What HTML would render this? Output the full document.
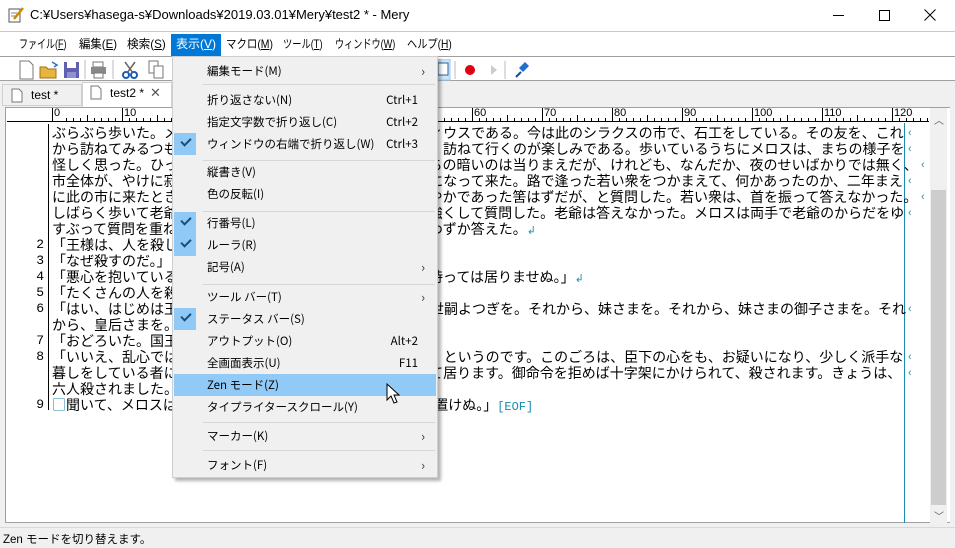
<!DOCTYPE html>
<html><head><meta charset="utf-8"><style>
*{margin:0;padding:0;box-sizing:border-box}
body{width:955px;height:548px;overflow:hidden;background:#f0f0f0;position:relative;font-family:"Liberation Sans","Noto Sans CJK JP",sans-serif;font-size:12px;color:#000}
.abs{position:absolute}
#title{left:0;top:0;width:955px;height:31px;background:#fff}
#menubar{left:0;top:31px;width:955px;height:25px;background:#fff;border-top:1px solid #c8c8c8}
#menubar span{position:absolute;top:5px;font-size:12px;white-space:nowrap;font-family:"Liberation Sans","Noto Sans CJK JP",sans-serif;line-height:15px;transform-origin:0 50%}
#toolbar{left:0;top:56px;width:955px;height:25px;background:#fff;border-top:1px solid #a0a0a0;border-bottom:1px solid #a0a0a0}
.row{position:absolute;left:52px;font-family:"Noto Sans CJK JP",sans-serif;font-size:14px;line-height:16px;white-space:pre;height:16px}
.ln{position:absolute;left:20px;width:24px;text-align:right;font-family:"Liberation Mono",monospace;font-size:13px;line-height:16px}
#menu{left:172px;top:56px;width:266px;height:422px;background:#f0f0f0;border:1px solid #cfcfcf;box-shadow:3px 3px 3px rgba(0,0,0,.3)}
.mi{position:absolute;left:34px;font-family:"Noto Sans CJK JP",sans-serif;font-size:11.5px;line-height:22px;height:22px;width:230px}
.sc{position:absolute;right:19px;top:0}
.ar{position:absolute;right:12px;top:0;font-size:13px;color:#333}
.sep{position:absolute;left:30px;width:232px;height:1px;background:#d7d7d7}
.ck{position:absolute;left:1px;width:22px;height:22px;background:#90c8f6}
.ck:after{content:"";position:absolute;left:7px;top:5px;width:8px;height:4px;border-left:2px solid #1a4f7a;border-bottom:2px solid #1a4f7a;transform:rotate(-45deg)}
.mk{position:absolute;left:908px;color:#2a8fb0;font-size:11px;line-height:16px}
</style></head><body>
<div id="title" class="abs">
 <svg class="abs" style="left:8px;top:7px" width="16" height="16"><rect x="1" y="2" width="11" height="13" fill="#fff" stroke="#555"/><line x1="3" y1="6" x2="9" y2="6" stroke="#888"/><line x1="3" y1="9" x2="9" y2="9" stroke="#888"/><line x1="6" y1="12" x2="15" y2="1" stroke="#c80" stroke-width="2.5"/></svg>
 <div class="abs" style="left:30px;top:7px;font-size:13px">C:¥Users¥hasega-s¥Downloads¥2019.03.01¥Mery¥test2 * - Mery</div>
 <div class="abs" style="left:833px;top:15px;width:11px;height:1px;background:#000"></div>
 <div class="abs" style="left:879px;top:10px;width:11px;height:11px;border:1px solid #000"></div>
 <svg class="abs" style="left:924px;top:9px" width="12" height="12"><path d="M0.5 0.5L11.5 11.5M11.5 0.5L0.5 11.5" stroke="#000" stroke-width="1"/></svg>
</div>
<div id="menubar" class="abs">
 <span style="left:19px;transform:scaleX(.75)">ファイル(<u>F</u>)</span>
 <span style="left:79px;transform:scaleX(.95)">編集(<u>E</u>)</span>
 <span style="left:127px;transform:scaleX(.97)">検索(<u>S</u>)</span>
 <div class="abs" style="left:171px;top:2px;width:50px;height:23px;background:#0078d7"></div>
 <span style="left:176px;color:#fff">表示(<u>V</u>)</span>
 <span style="left:226px;transform:scaleX(.87)">マクロ(<u>M</u>)</span>
 <span style="left:283px;transform:scaleX(.77)">ツール(<u>T</u>)</span>
 <span style="left:335px;transform:scaleX(.76)">ウィンドウ(<u>W</u>)</span>
 <span style="left:407px;transform:scaleX(.85)">ヘルプ(<u>H</u>)</span>
</div>
<div id="toolbar" class="abs">
 <svg class="abs" style="left:18px;top:3px" width="180" height="20">
  <path d="M2 1h9l4 4v14H2z" fill="#fff" stroke="#777"/>
  <path d="M22 7h6l2 2h8v9H22z" fill="#e8b440" stroke="#a07010"/><path d="M34 2l5 3-3 2" fill="none" stroke="#3070c0" stroke-width="1.5"/>
  <rect x="46" y="2" width="15" height="16" fill="#6060b0"/><rect x="49" y="2" width="9" height="6" fill="#fff"/><rect x="49" y="12" width="9" height="6" fill="#9090d0"/>
  <line x1="67" y1="0" x2="67" y2="19" stroke="#bbb"/>
  <rect x="75" y="2" width="10" height="5" fill="#fff" stroke="#777"/><rect x="73" y="7" width="15" height="7" fill="#888"/><rect x="76" y="13" width="9" height="5" fill="#fff" stroke="#777"/>
  <line x1="95" y1="0" x2="95" y2="19" stroke="#bbb"/>
  <circle cx="108" cy="15" r="3" fill="none" stroke="#1060c0" stroke-width="2"/><circle cx="116" cy="15" r="3" fill="none" stroke="#1060c0" stroke-width="2"/><path d="M107 2l8 11M117 2l-8 11" stroke="#666" stroke-width="1.5"/>
  <rect x="131" y="1" width="9" height="12" fill="#fff" stroke="#777"/><rect x="136" y="6" width="9" height="12" fill="#fff" stroke="#777"/>
 </svg>
 <svg class="abs" style="left:436px;top:2px" width="100" height="22">
  <rect x="0" y="0" width="14" height="21" fill="#cce4f7" stroke="#99c9ef"/><rect x="2" y="4" width="10" height="12" fill="#fff" stroke="#3060a0"/>
  <line x1="19" y1="2" x2="19" y2="20" stroke="#bbb"/>
  <circle cx="34" cy="11" r="5" fill="#e00010"/>
  <path d="M55 6l6 5-6 5z" fill="#ccc"/>
  <line x1="69" y1="2" x2="69" y2="20" stroke="#bbb"/>
  <path d="M80 18l5-5" stroke="#1050a0" stroke-width="2"/><path d="M83 9l6-6 4 4-6 6z" fill="#2070d0"/>
 </svg>
</div>
<!-- tabs -->
<div class="abs" style="left:2px;top:84px;width:80px;height:22px;background:#f0f0f0;border:1px solid #d0d0d0"></div>
<svg class="abs" style="left:11px;top:88px" width="12" height="15"><path d="M1 1h7l3 3v10H1z" fill="#fff" stroke="#777"/></svg>
<div class="abs" style="left:31px;top:88px;font-size:12px">test *</div>
<div class="abs" style="left:82px;top:82px;width:90px;height:25px;background:#fff;border:1px solid #d0d0d0;border-bottom:none"></div>
<svg class="abs" style="left:90px;top:85px" width="12" height="15"><path d="M1 1h7l3 3v10H1z" fill="#fff" stroke="#777"/></svg>
<div class="abs" style="left:110px;top:86px;font-size:12px">test2 *</div>
<div class="abs" style="left:150px;top:85px;font-size:13px;color:#555">✕</div>
<!-- editor -->
<div class="abs" style="left:5px;top:107px;width:945px;height:416px;background:#fff;border:1px solid #a0a0a0;border-right:none"></div>
<div class="abs" style="left:7px;top:109px;width:922px;height:13px;border-bottom:1px solid #000;background:repeating-linear-gradient(90deg,transparent 0,transparent 6px,#000 6px,#000 7px) 53px 9px/868px 4px no-repeat"></div>
<div class="abs" style="left:52px;top:108px;width:875px;height:14px;background:repeating-linear-gradient(90deg,#000 0,#000 1px,transparent 1px,transparent 70px),repeating-linear-gradient(90deg,transparent 0,transparent 35px,#000 35px,#000 36px,transparent 36px,transparent 70px) 0 7px/875px 7px no-repeat"></div>
<div class="abs" style="left:54px;top:107px;font-size:11px;width:900px;font-family:'Liberation Sans',sans-serif">
<span class="abs" style="left:0">0</span><span class="abs" style="left:70px">10</span><span class="abs" style="left:140px">20</span><span class="abs" style="left:210px">30</span><span class="abs" style="left:280px">40</span><span class="abs" style="left:350px">50</span><span class="abs" style="left:420px">60</span><span class="abs" style="left:490px">70</span><span class="abs" style="left:560px">80</span><span class="abs" style="left:630px">90</span><span class="abs" style="left:700px">100</span><span class="abs" style="left:770px">110</span><span class="abs" style="left:840px">120</span></div>
<div class="abs" style="left:48px;top:124px;width:1px;height:286px;background:#000"></div>
<div class="abs" style="left:904px;top:123px;width:1px;height:400px;background:#1a8ab0"></div>
<div class="row" style="top:125px">ぶらぶら歩いた。メロスには竹馬の友があった。セリヌンティウスである。今は此のシラクスの市で、石工をしている。その友を、これ</div>
<div class="row" style="top:141px">から訪ねてみるつもりなのだ。久しく逢わなかったのだから、訪ねて行くのが楽しみである。歩いているうちにメロスは、まちの様子を</div>
<div class="row" style="top:157px">怪しく思った。ひっそりしている。もう既に日も落ちて、まちの暗いのは当りまえだが、けれども、なんだか、夜のせいばかりでは無く、</div>
<div class="row" style="top:173px">市全体が、やけに寂しい。のんきなメロスも、だんだん不安になって来た。路で逢った若い衆をつかまえて、何かあったのか、二年まえ</div>
<div class="row" style="top:189px">に此の市に来たときは、夜でも皆が歌をうたって、まちは賑やかであった筈はずだが、と質問した。若い衆は、首を振って答えなかった。</div>
<div class="row" style="top:205px">しばらく歩いて老爺に逢い、こんどはもっと、さらに語勢を強くして質問した。老爺は答えなかった。メロスは両手で老爺のからだをゆ</div>
<div class="row" style="top:221px">すぶって質問を重ねた。老爺は、あたりをはばかる低声で、わずか答えた。<span style="color:#2a8fb0;font-size:11px">↲</span></div>
<div class="row" style="top:237px">「王様は、人を殺します。」</div>
<div class="row" style="top:253px">「なぜ殺すのだ。」</div>
<div class="row" style="top:269px">「悪心を抱いている、というのですが、誰もそんな、悪心を持っては居りませぬ。」<span style="color:#2a8fb0;font-size:11px">↲</span></div>
<div class="row" style="top:285px">「たくさんの人を殺したのか。」</div>
<div class="row" style="top:301px">「はい、はじめは王様の妹婿さまを。それから、御自身のお世嗣よつぎを。それから、妹さまを。それから、妹さまの御子さまを。それ</div>
<div class="row" style="top:317px">から、皇后さまを。それから、賢臣のアレキス様を。」</div>
<div class="row" style="top:333px">「おどろいた。国王は乱心か。」</div>
<div class="row" style="top:349px">「いいえ、乱心ではございませぬ。人を、信ずる事が出来ぬ、というのです。このごろは、臣下の心をも、お疑いになり、少しく派手な</div>
<div class="row" style="top:365px">暮しをしている者には、人質ひとりずつ差し出すことを命じて居ります。御命令を拒めば十字架にかけられて、殺されます。きょうは、</div>
<div class="row" style="top:381px">六人殺されました。</div>
<div class="row" style="top:397px"><span style="color:#1a8ab0">□</span>聞いて、メロスはひどく激怒した。「呆れた王だ。生かして置けぬ。」<span style="color:#1a8ab0;font-family:'Liberation Mono',monospace;font-size:12px">[EOF]</span></div>
<div class="ln" style="top:237px">2</div><div class="ln" style="top:253px">3</div><div class="ln" style="top:269px">4</div><div class="ln" style="top:285px">5</div><div class="ln" style="top:301px">6</div><div class="ln" style="top:333px">7</div><div class="ln" style="top:349px">8</div><div class="ln" style="top:397px">9</div>
<div class="mk" style="top:125px">‹</div><div class="mk" style="top:141px">‹</div><div class="mk" style="top:157px;left:921px">‹</div><div class="mk" style="top:173px">‹</div><div class="mk" style="top:189px;left:921px">‹</div><div class="mk" style="top:205px">‹</div><div class="mk" style="top:301px">‹</div><div class="mk" style="top:349px">‹</div><div class="mk" style="top:365px">‹</div>
<!-- scrollbar -->
<div class="abs" style="left:930px;top:108px;width:17px;height:415px;background:#f0f0f0"></div>
<div class="abs" style="left:931px;top:190px;width:15px;height:315px;background:#cdcdcd"></div>
<div class="abs" style="left:934px;top:112px;font-size:10px;color:#555">︿</div>
<div class="abs" style="left:934px;top:508px;font-size:10px;color:#555">﹀</div>
<!-- status -->
<div class="abs" style="left:0;top:527px;width:955px;height:21px;background:#f0f0f0;border-top:1px solid #d8d8d8"></div>
<div class="abs" style="left:3px;top:531px;font-size:11.5px">Zen モードを切り替えます。</div>
<!-- menu -->
<div id="menu" class="abs">
 <div class="mi" style="top:3px">編集モード(M)<span class="ar">›</span></div>
 <div class="sep" style="top:27px"></div>
 <div class="mi" style="top:32px">折り返さない(N)<span class="sc">Ctrl+1</span></div>
 <div class="mi" style="top:54px">指定文字数で折り返し(C)<span class="sc">Ctrl+2</span></div>
 <div class="ck" style="top:76px"></div>
 <div class="mi" style="top:76px">ウィンドウの右端で折り返し(W)<span class="sc">Ctrl+3</span></div>
 <div class="sep" style="top:103px"></div>
 <div class="mi" style="top:104px">縦書き(V)</div>
 <div class="mi" style="top:126px">色の反転(I)</div>
 <div class="sep" style="top:154px"></div>
 <div class="ck" style="top:155px"></div>
 <div class="mi" style="top:155px">行番号(L)</div>
 <div class="ck" style="top:177px"></div>
 <div class="mi" style="top:177px">ルーラ(R)</div>
 <div class="mi" style="top:199px">記号(A)<span class="ar">›</span></div>
 <div class="sep" style="top:227px"></div>
 <div class="mi" style="top:229px">ツール バー(T)<span class="ar">›</span></div>
 <div class="ck" style="top:251px"></div>
 <div class="mi" style="top:251px">ステータス バー(S)</div>
 <div class="mi" style="top:273px">アウトプット(O)<span class="sc">Alt+2</span></div>
 <div class="mi" style="top:295px">全画面表示(U)<span class="sc">F11</span></div>
 <div class="abs" style="left:1px;top:317px;width:262px;height:22px;background:#91c9f7"></div>
 <div class="mi" style="top:317px">Zen モード(Z)</div>
 <div class="mi" style="top:339px">タイプライタースクロール(Y)</div>
 <div class="sep" style="top:365px"></div>
 <div class="mi" style="top:368px">マーカー(K)<span class="ar">›</span></div>
 <div class="sep" style="top:393px"></div>
 <div class="mi" style="top:397px">フォント(F)<span class="ar">›</span></div>
</div>
<svg class="abs" style="left:386px;top:383px" width="14" height="22"><path d="M1 1v16l4-4 3 7 3-1-3-7h5z" fill="#fff" stroke="#000"/></svg>
</body></html>
